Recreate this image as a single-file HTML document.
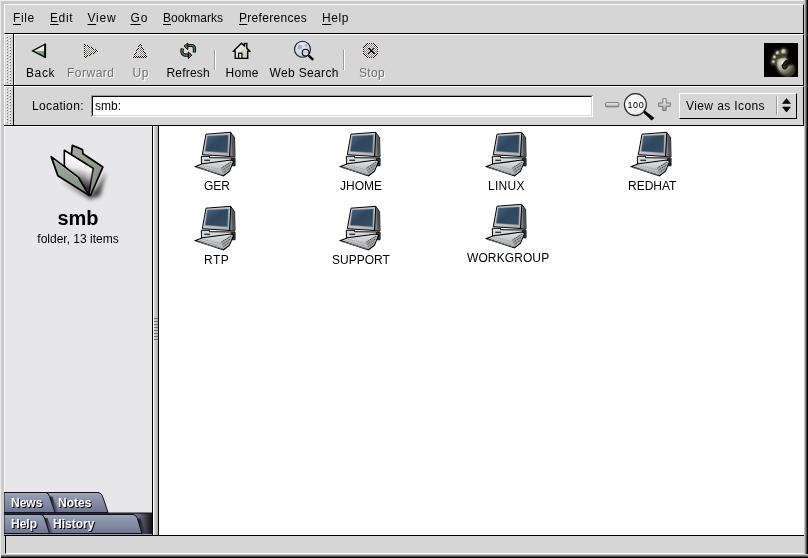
<!DOCTYPE html>
<html><head><meta charset="utf-8">
<style>
*{margin:0;padding:0;box-sizing:border-box}
html,body{width:808px;height:558px;overflow:hidden;background:#d6d6d6;position:relative;font-family:"Liberation Sans",sans-serif;font-size:12px;color:#000}
.a{position:absolute}
.t{position:absolute;white-space:nowrap;line-height:14px;font-size:12px}
.u{text-decoration:underline;text-underline-offset:2px}
.dis{color:#6e6e6e;text-shadow:1px 1px 0 #fff}
</style></head><body><div id="wrap" style="position:absolute;left:0;top:0;width:808px;height:558px;overflow:hidden;will-change:transform">
<!-- window frame -->
<div class="a" style="left:0;top:0;width:808px;height:1px;background:#f0f0f0"></div>
<div class="a" style="left:0;top:0;width:1px;height:558px;background:#ececec"></div>
<div class="a" style="left:1px;top:1px;width:803px;height:3px;background:#cbcbcb"></div>
<div class="a" style="left:1px;top:1px;width:3px;height:553px;background:#cbcbcb"></div>
<div class="a" style="left:804px;top:0;width:4px;height:558px;background:linear-gradient(90deg,#c4c4c4 0,#c4c4c4 1px,#888 1px,#888 2px,#444 2px,#444 3px,#000 3px)"></div>
<div class="a" style="left:1px;top:554px;width:807px;height:4px;background:linear-gradient(180deg,#c4c4c4 0,#c4c4c4 1px,#888 1px,#888 2px,#444 2px,#444 3px,#000 3px)"></div>

<!-- menubar -->
<div class="a" style="left:4px;top:4px;width:800px;height:30px;background:#d6d6d6;border-left:1px solid #fff;border-top:1px solid #fafafa;border-right:1px solid #000;border-bottom:1px solid #000"></div>
<div class="t" style="left:13px;top:11px;letter-spacing:0.6px"><span class="u">F</span>ile</div>
<div class="t" style="left:50px;top:11px;letter-spacing:0.6px"><span class="u">E</span>dit</div>
<div class="t" style="left:87.5px;top:11px;letter-spacing:0.8px"><span class="u">V</span>iew</div>
<div class="t" style="left:130.5px;top:11px;letter-spacing:0.8px"><span class="u">G</span>o</div>
<div class="t" style="left:163px;top:11px"><span class="u">B</span>ookmarks</div>
<div class="t" style="left:239px;top:11px;letter-spacing:0.3px"><span class="u">P</span>references</div>
<div class="t" style="left:322px;top:11px;letter-spacing:0.6px"><span class="u">H</span>elp</div>

<!-- toolbar -->
<div class="a" style="left:4px;top:34px;width:800px;height:52px;background:#d6d6d6;border-top:1px solid #fff;border-right:1px solid #000;border-bottom:1px solid #000"></div>
<div class="a" style="left:4px;top:34px;width:10px;height:51px;border-left:1px solid #fff;border-right:1px solid #000"></div>
<div class="a" style="left:14px;top:35px;width:1px;height:50px;background:#f4f4f4"></div>

<div class="t" style="left:26px;top:66px;letter-spacing:0.6px">Back</div>
<div class="t dis" style="left:67px;top:66px;letter-spacing:0.5px">Forward</div>
<div class="t dis" style="left:132.5px;top:66px;letter-spacing:0.5px">Up</div>
<div class="t" style="left:166.5px;top:66px;letter-spacing:0.2px">Refresh</div>
<div class="t" style="left:225.5px;top:66px;letter-spacing:0.3px">Home</div>
<div class="t" style="left:269.5px;top:66px;letter-spacing:0.35px">Web Search</div>
<div class="t dis" style="left:359px;top:66px;letter-spacing:0.3px">Stop</div>
<div class="a" style="left:214px;top:50px;width:1px;height:20px;background:#9a9a9a"></div>
<div class="a" style="left:215px;top:50px;width:1px;height:20px;background:#fff"></div>
<div class="a" style="left:343px;top:50px;width:1px;height:20px;background:#9a9a9a"></div>
<div class="a" style="left:344px;top:50px;width:1px;height:20px;background:#fff"></div>

<!-- location bar -->
<div class="a" style="left:4px;top:86px;width:800px;height:40px;background:#d6d6d6;border-top:1px solid #fff;border-right:1px solid #000;border-bottom:1px solid #000"></div>
<div class="a" style="left:4px;top:86px;width:10px;height:39px;border-left:1px solid #fff;border-right:1px solid #000"></div>
<div class="t" style="left:32px;top:99px;letter-spacing:0.35px">Location:</div>
<div class="a" style="left:91px;top:95px;width:502px;height:22px;background:#fff;border-left:1px solid #9a9a9a;border-top:1px solid #9a9a9a"></div>
<div class="a" style="left:92px;top:96px;width:500px;height:20px;border-left:1px solid #000;border-top:1px solid #000;border-bottom:1px solid #d6d6d6;border-right:1px solid #d6d6d6"></div>
<div class="t" style="left:95px;top:99px">smb:</div>
<div class="a" style="left:679px;top:93px;width:118px;height:26px;border-left:1px solid #fff;border-top:1px solid #fff;border-right:1px solid #000;border-bottom:1px solid #000"></div>
<div class="t" style="left:686px;top:99px;letter-spacing:0.4px">View as Icons</div>
<div class="a" style="left:776px;top:96px;width:1px;height:19px;background:#9a9a9a"></div>
<div class="a" style="left:777px;top:96px;width:1px;height:19px;background:#fff"></div>

<!-- sidebar -->
<div class="a" style="left:4px;top:126px;width:148px;height:409px;background:#e7e7e9;border-top:1px solid #f6f6f6;border-left:1px solid #f4f4f4"></div>
<div class="a" style="left:152px;top:126px;width:1px;height:409px;background:#000"></div>
<div class="a" style="left:153px;top:126px;width:5px;height:409px;background:linear-gradient(90deg,#fff 0,#fff 1px,#dcdcdc 1px,#a8a8a8)"></div>
<div class="a" style="left:158px;top:126px;width:1px;height:409px;background:#000"></div>
<div class="a" style="left:159px;top:126px;width:645px;height:409px;background:#fff"></div>
<div class="a" style="left:4px;top:535px;width:800px;height:1px;background:#000"></div>
<div class="a" style="left:4px;top:125px;width:800px;height:1px;background:#000"></div>

<div class="a" style="left:0;top:208px;width:156px;text-align:center;font-weight:bold;font-size:20px;line-height:20px">smb</div>
<div class="t" style="left:0;top:232px;width:156px;text-align:center">folder, 13 items</div>

<!-- status -->
<div class="a" style="left:5px;top:536px;width:799px;height:18px;background:#d6d6d6;border-left:1px solid #000;border-bottom:1px solid #fff"></div>

<!-- content labels -->
<div class="t" style="left:204px;top:179px">GER</div>
<div class="t" style="left:340px;top:179px">JHOME</div>
<div class="t" style="left:488px;top:179px;letter-spacing:0.3px">LINUX</div>
<div class="t" style="left:628px;top:179px">REDHAT</div>
<div class="t" style="left:204px;top:253px;letter-spacing:0.5px">RTP</div>
<div class="t" style="left:332px;top:253px">SUPPORT</div>
<div class="t" style="left:467px;top:251px;letter-spacing:0.1px">WORKGROUP</div>

<!-- SVG defs -->
<svg class="a" style="left:0;top:0" width="0" height="0">
<defs>
<linearGradient id="scr" x1="0" y1="0" x2="1" y2="1"><stop offset="0" stop-color="#4a6580"/><stop offset="0.45" stop-color="#2f475e"/><stop offset="1" stop-color="#364e66"/></linearGradient>
<linearGradient id="bez" x1="0" y1="0" x2="1" y2="1"><stop offset="0" stop-color="#dcdee0"/><stop offset="1" stop-color="#a8acb0"/></linearGradient>
<linearGradient id="kb" x1="0" y1="0" x2="0" y2="1"><stop offset="0" stop-color="#e2e4e4"/><stop offset="1" stop-color="#a8acae"/></linearGradient>
<pattern id="chk" width="2" height="2" patternUnits="userSpaceOnUse"><rect width="2" height="2" fill="#f0f0f0"/><rect width="1" height="1" fill="#8a8a8a"/><rect x="1" y="1" width="1" height="1" fill="#8a8a8a"/></pattern>
<pattern id="chkg" width="2" height="2" patternUnits="userSpaceOnUse"><rect width="2" height="2" fill="#e8e8e8"/><rect width="1" height="1" fill="#5a7a5a"/><rect x="1" y="1" width="1" height="1" fill="#5a7a5a"/></pattern>
<symbol id="pc" viewBox="0 0 50 50">
  <polygon points="38.5,4.3 42.6,9.5 43,29 37,28.5" fill="#7c8084" stroke="#000" stroke-width="0.9"/>
  <polygon points="39.5,6.5 42.4,9.8 42.6,28.6 40.5,28.5" fill="#505458"/>
  <polygon points="14,6.2 38.8,4.3 37.5,28.5 10.3,26.7" fill="url(#bez)" stroke="#000" stroke-width="1"/>
  <polygon points="15.4,8 36.3,7 35.6,24.8 13.2,23.2" fill="url(#scr)" stroke="#6a7480" stroke-width="0.5"/>
  <polygon points="9.3,28.3 17.5,28.3 17.5,29.7 43,30 43,37.8 9.5,36.5" fill="#d6d8da" stroke="#000" stroke-width="1"/>
  <polygon points="39,30 43,30 43,37.8 39,37.5" fill="#262829"/>
  <rect x="12.3" y="31.6" width="5.8" height="1.4" fill="#303234"/>
  <polygon points="3.5,38.6 10.5,35.8 39,32 41.5,33.2 37.5,43.2 31.5,47.8" fill="url(#kb)" stroke="#000" stroke-width="1.1"/>
  <polygon points="28.5,40.2 38.5,33.5 40.5,34.2 36.8,42.5 31.5,46.5" fill="#a4a8aa"/>
  <path d="M29.5,40 L38.8,34.2 M30.5,42.2 L38.5,37 M31.5,44.4 L37.8,40" stroke="#2a2c2e" stroke-width="0.9" stroke-dasharray="1.1 0.9"/>
  <path d="M8,38.6 L27,43.6 M11,37.4 L29,41.6" stroke="#8a8e90" stroke-width="0.7" stroke-dasharray="1.2 0.8"/>
  <path d="M4.8,39.6 L31,47" stroke="#7a7e80" stroke-width="0.9"/>
</symbol>
</defs></svg>

<!-- toolbar icons -->
<svg class="a" style="left:28px;top:40px" width="24" height="22" viewBox="0 0 24 22">
  <defs><linearGradient id="bk" x1="0" y1="0" x2="0" y2="1"><stop offset="0" stop-color="#ffffff"/><stop offset="0.49" stop-color="#dfe8df"/><stop offset="0.5" stop-color="#7cb07c"/><stop offset="1" stop-color="#4a8a4a"/></linearGradient></defs>
  <polygon points="4.6,10.9 17,4.3 17,17.3" fill="url(#bk)" stroke="#000" stroke-width="1.2" stroke-linejoin="miter"/>
  <rect x="16.3" y="3.8" width="1.8" height="14" fill="#000"/>
</svg>
<svg class="a" style="left:84px;top:44px" width="14" height="14" shape-rendering="crispEdges"><rect x="0" y="0" width="1" height="1" fill="#000"/><rect x="0" y="1" width="1" height="1" fill="#fff"/><rect x="1" y="1" width="1" height="1" fill="#000"/><rect x="2" y="1" width="1" height="1" fill="#fff"/><rect x="3" y="1" width="1" height="1" fill="#000"/><rect x="0" y="2" width="1" height="1" fill="#000"/><rect x="1" y="2" width="1" height="1" fill="#f4f4f4"/><rect x="2" y="2" width="1" height="1" fill="#9a9a9a"/><rect x="3" y="2" width="1" height="1" fill="#fff"/><rect x="4" y="2" width="1" height="1" fill="#000"/><rect x="0" y="3" width="1" height="1" fill="#fff"/><rect x="1" y="3" width="1" height="1" fill="#9a9a9a"/><rect x="2" y="3" width="1" height="1" fill="#f4f4f4"/><rect x="3" y="3" width="1" height="1" fill="#9a9a9a"/><rect x="4" y="3" width="1" height="1" fill="#f4f4f4"/><rect x="5" y="3" width="1" height="1" fill="#000"/><rect x="6" y="3" width="1" height="1" fill="#fff"/><rect x="7" y="3" width="1" height="1" fill="#000"/><rect x="0" y="4" width="1" height="1" fill="#000"/><rect x="1" y="4" width="1" height="1" fill="#f4f4f4"/><rect x="2" y="4" width="1" height="1" fill="#9a9a9a"/><rect x="3" y="4" width="1" height="1" fill="#f4f4f4"/><rect x="4" y="4" width="1" height="1" fill="#9a9a9a"/><rect x="5" y="4" width="1" height="1" fill="#f4f4f4"/><rect x="6" y="4" width="1" height="1" fill="#9a9a9a"/><rect x="7" y="4" width="1" height="1" fill="#fff"/><rect x="8" y="4" width="1" height="1" fill="#000"/><rect x="0" y="5" width="1" height="1" fill="#fff"/><rect x="1" y="5" width="1" height="1" fill="#9a9a9a"/><rect x="2" y="5" width="1" height="1" fill="#f4f4f4"/><rect x="3" y="5" width="1" height="1" fill="#9a9a9a"/><rect x="4" y="5" width="1" height="1" fill="#f4f4f4"/><rect x="5" y="5" width="1" height="1" fill="#9a9a9a"/><rect x="6" y="5" width="1" height="1" fill="#f4f4f4"/><rect x="7" y="5" width="1" height="1" fill="#9a9a9a"/><rect x="8" y="5" width="1" height="1" fill="#f4f4f4"/><rect x="9" y="5" width="1" height="1" fill="#000"/><rect x="10" y="5" width="1" height="1" fill="#fff"/><rect x="11" y="5" width="1" height="1" fill="#000"/><rect x="0" y="6" width="1" height="1" fill="#000"/><rect x="1" y="6" width="1" height="1" fill="#f4f4f4"/><rect x="2" y="6" width="1" height="1" fill="#6a806a"/><rect x="3" y="6" width="1" height="1" fill="#f4f4f4"/><rect x="4" y="6" width="1" height="1" fill="#6a806a"/><rect x="5" y="6" width="1" height="1" fill="#f4f4f4"/><rect x="6" y="6" width="1" height="1" fill="#6a806a"/><rect x="7" y="6" width="1" height="1" fill="#f4f4f4"/><rect x="8" y="6" width="1" height="1" fill="#6a806a"/><rect x="9" y="6" width="1" height="1" fill="#f4f4f4"/><rect x="10" y="6" width="1" height="1" fill="#6a806a"/><rect x="11" y="6" width="1" height="1" fill="#fff"/><rect x="12" y="6" width="1" height="1" fill="#000"/><rect x="0" y="7" width="1" height="1" fill="#fff"/><rect x="1" y="7" width="1" height="1" fill="#6a806a"/><rect x="2" y="7" width="1" height="1" fill="#f4f4f4"/><rect x="3" y="7" width="1" height="1" fill="#6a806a"/><rect x="4" y="7" width="1" height="1" fill="#f4f4f4"/><rect x="5" y="7" width="1" height="1" fill="#6a806a"/><rect x="6" y="7" width="1" height="1" fill="#f4f4f4"/><rect x="7" y="7" width="1" height="1" fill="#6a806a"/><rect x="8" y="7" width="1" height="1" fill="#f4f4f4"/><rect x="9" y="7" width="1" height="1" fill="#6a806a"/><rect x="10" y="7" width="1" height="1" fill="#f4f4f4"/><rect x="11" y="7" width="1" height="1" fill="#000"/><rect x="12" y="7" width="1" height="1" fill="#fff"/><rect x="13" y="7" width="1" height="1" fill="#000"/><rect x="0" y="8" width="1" height="1" fill="#000"/><rect x="1" y="8" width="1" height="1" fill="#f4f4f4"/><rect x="2" y="8" width="1" height="1" fill="#6a806a"/><rect x="3" y="8" width="1" height="1" fill="#f4f4f4"/><rect x="4" y="8" width="1" height="1" fill="#6a806a"/><rect x="5" y="8" width="1" height="1" fill="#f4f4f4"/><rect x="6" y="8" width="1" height="1" fill="#6a806a"/><rect x="7" y="8" width="1" height="1" fill="#f4f4f4"/><rect x="8" y="8" width="1" height="1" fill="#6a806a"/><rect x="9" y="8" width="1" height="1" fill="#fff"/><rect x="10" y="8" width="1" height="1" fill="#000"/><rect x="0" y="9" width="1" height="1" fill="#fff"/><rect x="1" y="9" width="1" height="1" fill="#6a806a"/><rect x="2" y="9" width="1" height="1" fill="#f4f4f4"/><rect x="3" y="9" width="1" height="1" fill="#6a806a"/><rect x="4" y="9" width="1" height="1" fill="#f4f4f4"/><rect x="5" y="9" width="1" height="1" fill="#6a806a"/><rect x="6" y="9" width="1" height="1" fill="#f4f4f4"/><rect x="7" y="9" width="1" height="1" fill="#000"/><rect x="8" y="9" width="1" height="1" fill="#fff"/><rect x="9" y="9" width="1" height="1" fill="#000"/><rect x="0" y="10" width="1" height="1" fill="#000"/><rect x="1" y="10" width="1" height="1" fill="#f4f4f4"/><rect x="2" y="10" width="1" height="1" fill="#6a806a"/><rect x="3" y="10" width="1" height="1" fill="#f4f4f4"/><rect x="4" y="10" width="1" height="1" fill="#6a806a"/><rect x="5" y="10" width="1" height="1" fill="#fff"/><rect x="6" y="10" width="1" height="1" fill="#000"/><rect x="0" y="11" width="1" height="1" fill="#fff"/><rect x="1" y="11" width="1" height="1" fill="#6a806a"/><rect x="2" y="11" width="1" height="1" fill="#f4f4f4"/><rect x="3" y="11" width="1" height="1" fill="#000"/><rect x="4" y="11" width="1" height="1" fill="#fff"/><rect x="5" y="11" width="1" height="1" fill="#000"/><rect x="0" y="12" width="1" height="1" fill="#000"/><rect x="1" y="12" width="1" height="1" fill="#fff"/><rect x="2" y="12" width="1" height="1" fill="#000"/><rect x="0" y="13" width="1" height="1" fill="#fff"/><rect x="1" y="13" width="1" height="1" fill="#000"/></svg>
<svg class="a" style="left:133px;top:44px" width="14" height="14" shape-rendering="crispEdges"><rect x="7" y="0" width="1" height="1" fill="#000"/><rect x="6" y="1" width="1" height="1" fill="#000"/><rect x="7" y="1" width="1" height="1" fill="#fff"/><rect x="8" y="1" width="1" height="1" fill="#000"/><rect x="5" y="2" width="1" height="1" fill="#000"/><rect x="6" y="2" width="1" height="1" fill="#fff"/><rect x="7" y="2" width="1" height="1" fill="#6a806a"/><rect x="5" y="3" width="1" height="1" fill="#fff"/><rect x="6" y="3" width="1" height="1" fill="#9a9a9a"/><rect x="7" y="3" width="1" height="1" fill="#f4f4f4"/><rect x="8" y="3" width="1" height="1" fill="#000"/><rect x="5" y="4" width="1" height="1" fill="#000"/><rect x="6" y="4" width="1" height="1" fill="#f4f4f4"/><rect x="7" y="4" width="1" height="1" fill="#6a806a"/><rect x="8" y="4" width="1" height="1" fill="#f4f4f4"/><rect x="9" y="4" width="1" height="1" fill="#000"/><rect x="4" y="5" width="1" height="1" fill="#000"/><rect x="5" y="5" width="1" height="1" fill="#f4f4f4"/><rect x="6" y="5" width="1" height="1" fill="#9a9a9a"/><rect x="7" y="5" width="1" height="1" fill="#f4f4f4"/><rect x="8" y="5" width="1" height="1" fill="#6a806a"/><rect x="9" y="5" width="1" height="1" fill="#fff"/><rect x="10" y="5" width="1" height="1" fill="#000"/><rect x="3" y="6" width="1" height="1" fill="#000"/><rect x="4" y="6" width="1" height="1" fill="#fff"/><rect x="5" y="6" width="1" height="1" fill="#9a9a9a"/><rect x="6" y="6" width="1" height="1" fill="#f4f4f4"/><rect x="7" y="6" width="1" height="1" fill="#6a806a"/><rect x="8" y="6" width="1" height="1" fill="#f4f4f4"/><rect x="9" y="6" width="1" height="1" fill="#6a806a"/><rect x="3" y="7" width="1" height="1" fill="#fff"/><rect x="4" y="7" width="1" height="1" fill="#9a9a9a"/><rect x="5" y="7" width="1" height="1" fill="#f4f4f4"/><rect x="6" y="7" width="1" height="1" fill="#9a9a9a"/><rect x="7" y="7" width="1" height="1" fill="#f4f4f4"/><rect x="8" y="7" width="1" height="1" fill="#6a806a"/><rect x="9" y="7" width="1" height="1" fill="#f4f4f4"/><rect x="10" y="7" width="1" height="1" fill="#000"/><rect x="3" y="8" width="1" height="1" fill="#000"/><rect x="4" y="8" width="1" height="1" fill="#f4f4f4"/><rect x="5" y="8" width="1" height="1" fill="#9a9a9a"/><rect x="6" y="8" width="1" height="1" fill="#f4f4f4"/><rect x="7" y="8" width="1" height="1" fill="#6a806a"/><rect x="8" y="8" width="1" height="1" fill="#f4f4f4"/><rect x="9" y="8" width="1" height="1" fill="#6a806a"/><rect x="10" y="8" width="1" height="1" fill="#f4f4f4"/><rect x="11" y="8" width="1" height="1" fill="#000"/><rect x="2" y="9" width="1" height="1" fill="#000"/><rect x="3" y="9" width="1" height="1" fill="#f4f4f4"/><rect x="4" y="9" width="1" height="1" fill="#9a9a9a"/><rect x="5" y="9" width="1" height="1" fill="#f4f4f4"/><rect x="6" y="9" width="1" height="1" fill="#9a9a9a"/><rect x="7" y="9" width="1" height="1" fill="#f4f4f4"/><rect x="8" y="9" width="1" height="1" fill="#6a806a"/><rect x="9" y="9" width="1" height="1" fill="#f4f4f4"/><rect x="10" y="9" width="1" height="1" fill="#6a806a"/><rect x="11" y="9" width="1" height="1" fill="#fff"/><rect x="12" y="9" width="1" height="1" fill="#000"/><rect x="1" y="10" width="1" height="1" fill="#000"/><rect x="2" y="10" width="1" height="1" fill="#fff"/><rect x="3" y="10" width="1" height="1" fill="#9a9a9a"/><rect x="4" y="10" width="1" height="1" fill="#f4f4f4"/><rect x="5" y="10" width="1" height="1" fill="#9a9a9a"/><rect x="6" y="10" width="1" height="1" fill="#f4f4f4"/><rect x="7" y="10" width="1" height="1" fill="#6a806a"/><rect x="8" y="10" width="1" height="1" fill="#f4f4f4"/><rect x="9" y="10" width="1" height="1" fill="#6a806a"/><rect x="10" y="10" width="1" height="1" fill="#f4f4f4"/><rect x="11" y="10" width="1" height="1" fill="#6a806a"/><rect x="1" y="11" width="1" height="1" fill="#fff"/><rect x="2" y="11" width="1" height="1" fill="#9a9a9a"/><rect x="3" y="11" width="1" height="1" fill="#f4f4f4"/><rect x="4" y="11" width="1" height="1" fill="#9a9a9a"/><rect x="5" y="11" width="1" height="1" fill="#f4f4f4"/><rect x="6" y="11" width="1" height="1" fill="#9a9a9a"/><rect x="7" y="11" width="1" height="1" fill="#f4f4f4"/><rect x="8" y="11" width="1" height="1" fill="#6a806a"/><rect x="9" y="11" width="1" height="1" fill="#f4f4f4"/><rect x="10" y="11" width="1" height="1" fill="#6a806a"/><rect x="11" y="11" width="1" height="1" fill="#f4f4f4"/><rect x="12" y="11" width="1" height="1" fill="#000"/><rect x="1" y="12" width="1" height="1" fill="#000"/><rect x="2" y="12" width="1" height="1" fill="#fff"/><rect x="3" y="12" width="1" height="1" fill="#000"/><rect x="4" y="12" width="1" height="1" fill="#fff"/><rect x="5" y="12" width="1" height="1" fill="#000"/><rect x="6" y="12" width="1" height="1" fill="#fff"/><rect x="7" y="12" width="1" height="1" fill="#000"/><rect x="8" y="12" width="1" height="1" fill="#fff"/><rect x="9" y="12" width="1" height="1" fill="#000"/><rect x="10" y="12" width="1" height="1" fill="#fff"/><rect x="11" y="12" width="1" height="1" fill="#000"/><rect x="12" y="12" width="1" height="1" fill="#fff"/><rect x="13" y="12" width="1" height="1" fill="#000"/><rect x="0" y="13" width="1" height="1" fill="#000"/><rect x="2" y="13" width="1" height="1" fill="#000"/><rect x="4" y="13" width="1" height="1" fill="#000"/><rect x="6" y="13" width="1" height="1" fill="#000"/><rect x="8" y="13" width="1" height="1" fill="#000"/><rect x="10" y="13" width="1" height="1" fill="#000"/><rect x="12" y="13" width="1" height="1" fill="#000"/></svg>
<svg class="a" style="left:176px;top:38px" width="24" height="24" viewBox="0 0 24 24">
  <path d="M12,7.5 L16,7.5 Q18.5,7.8 18.5,11 L18.3,14.5" fill="none" stroke="#000" stroke-width="3.2"/>
  <path d="M12,7.5 L16,7.5 Q18.5,7.8 18.5,11 L18.3,14.5" fill="none" stroke="#4f7a4f" stroke-width="1.4"/>
  <polygon points="8,8.2 11.8,5 11.8,11.5" fill="#4f7a4f" stroke="#000" stroke-width="1"/>
  <path d="M6.5,10.5 L5.8,13 Q6,16.5 9,17.2 L12.5,17.2" fill="none" stroke="#000" stroke-width="3.2"/>
  <path d="M6.5,10.5 L5.8,13 Q6,16.5 9,17.2 L12.5,17.2" fill="none" stroke="#4f7a4f" stroke-width="1.4"/>
  <polygon points="15.8,17.2 12.3,14 12.3,20.5" fill="#4f7a4f" stroke="#000" stroke-width="1"/>
</svg>
<svg class="a" style="left:228px;top:38px" width="28" height="24" viewBox="0 0 28 24">
  <defs><linearGradient id="hm" x1="0" y1="0" x2="1" y2="1"><stop offset="0" stop-color="#ffffff"/><stop offset="1" stop-color="#b8c0b0"/></linearGradient></defs>
  <polygon points="13.5,5.2 16.5,8 16.5,5.5 18.8,5.5 18.8,10.3 21.6,13.1 19.7,13.1 19.7,20.4 7.2,20.4 7.2,13.1 5.6,13.1" fill="url(#hm)" stroke="#000" stroke-width="1.4" stroke-linejoin="miter"/>
  <rect x="10.6" y="15.2" width="3.3" height="5.2" fill="#e8ece4" stroke="#000" stroke-width="1.2"/>
</svg>
<svg class="a" style="left:290px;top:38px" width="28" height="24" viewBox="0 0 28 24">
  <defs><radialGradient id="gl" cx="0.4" cy="0.35" r="0.7"><stop offset="0" stop-color="#c8c8cc"/><stop offset="0.3" stop-color="#dfe6ee"/><stop offset="1" stop-color="#b8c8d8"/></radialGradient></defs>
  <circle cx="12.5" cy="11.2" r="8" fill="url(#gl)" stroke="#1a1a1a" stroke-width="1.1"/><path d="M8,7.5 q2,-1 3.5,0.5 q0.5,2 -1,3.5 q-2,0.5 -3,-1 z M14.5,6 q2,0 3,2 q-1,1 -2.5,0.5 z" fill="#9a9aa0" opacity="0.7"/>
  <line x1="18.5" y1="17.5" x2="23.2" y2="21.8" stroke="#000" stroke-width="2.4"/>
  <circle cx="15.6" cy="14.6" r="3.4" fill="#d0d4da" stroke="#000" stroke-width="1.1"/>
</svg>
<svg class="a" style="left:363px;top:43px" width="15" height="15" shape-rendering="crispEdges"><rect x="4" y="0" width="1" height="1" fill="#000"/><rect x="5" y="0" width="1" height="1" fill="#ffffff"/><rect x="6" y="0" width="1" height="1" fill="#000"/><rect x="7" y="0" width="1" height="1" fill="#ffffff"/><rect x="8" y="0" width="1" height="1" fill="#000"/><rect x="9" y="0" width="1" height="1" fill="#ffffff"/><rect x="10" y="0" width="1" height="1" fill="#000"/><rect x="3" y="1" width="1" height="1" fill="#000"/><rect x="4" y="1" width="1" height="1" fill="#ffffff"/><rect x="5" y="1" width="1" height="1" fill="#8a7a7a"/><rect x="6" y="1" width="1" height="1" fill="#f4f4f4"/><rect x="7" y="1" width="1" height="1" fill="#8a7a7a"/><rect x="8" y="1" width="1" height="1" fill="#f4f4f4"/><rect x="9" y="1" width="1" height="1" fill="#8a7a7a"/><rect x="10" y="1" width="1" height="1" fill="#ffffff"/><rect x="11" y="1" width="1" height="1" fill="#000"/><rect x="2" y="2" width="1" height="1" fill="#000"/><rect x="3" y="2" width="1" height="1" fill="#f4f4f4"/><rect x="4" y="2" width="1" height="1" fill="#8a7a7a"/><rect x="5" y="2" width="1" height="1" fill="#f4f4f4"/><rect x="6" y="2" width="1" height="1" fill="#8a7a7a"/><rect x="7" y="2" width="1" height="1" fill="#f4f4f4"/><rect x="8" y="2" width="1" height="1" fill="#8a7a7a"/><rect x="9" y="2" width="1" height="1" fill="#f4f4f4"/><rect x="10" y="2" width="1" height="1" fill="#8a7a7a"/><rect x="11" y="2" width="1" height="1" fill="#f4f4f4"/><rect x="12" y="2" width="1" height="1" fill="#000"/><rect x="1" y="3" width="1" height="1" fill="#000"/><rect x="2" y="3" width="1" height="1" fill="#f4f4f4"/><rect x="3" y="3" width="1" height="1" fill="#8a7a7a"/><rect x="4" y="3" width="1" height="1" fill="#f4f4f4"/><rect x="5" y="3" width="1" height="1" fill="#8a7a7a"/><rect x="6" y="3" width="1" height="1" fill="#f4f4f4"/><rect x="7" y="3" width="1" height="1" fill="#8a7a7a"/><rect x="8" y="3" width="1" height="1" fill="#f4f4f4"/><rect x="9" y="3" width="1" height="1" fill="#8a7a7a"/><rect x="10" y="3" width="1" height="1" fill="#f4f4f4"/><rect x="11" y="3" width="1" height="1" fill="#8a7a7a"/><rect x="12" y="3" width="1" height="1" fill="#f4f4f4"/><rect x="13" y="3" width="1" height="1" fill="#000"/><rect x="0" y="4" width="1" height="1" fill="#000"/><rect x="1" y="4" width="1" height="1" fill="#ffffff"/><rect x="2" y="4" width="1" height="1" fill="#8a7a7a"/><rect x="3" y="4" width="1" height="1" fill="#f4f4f4"/><rect x="4" y="4" width="1" height="1" fill="#8a7a7a"/><rect x="5" y="4" width="1" height="1" fill="#f4f4f4"/><rect x="6" y="4" width="1" height="1" fill="#8a7a7a"/><rect x="7" y="4" width="1" height="1" fill="#f4f4f4"/><rect x="8" y="4" width="1" height="1" fill="#8a7a7a"/><rect x="9" y="4" width="1" height="1" fill="#f4f4f4"/><rect x="10" y="4" width="1" height="1" fill="#8a7a7a"/><rect x="11" y="4" width="1" height="1" fill="#f4f4f4"/><rect x="12" y="4" width="1" height="1" fill="#8a7a7a"/><rect x="13" y="4" width="1" height="1" fill="#ffffff"/><rect x="14" y="4" width="1" height="1" fill="#000"/><rect x="0" y="5" width="1" height="1" fill="#ffffff"/><rect x="1" y="5" width="1" height="1" fill="#8a7a7a"/><rect x="2" y="5" width="1" height="1" fill="#f4f4f4"/><rect x="3" y="5" width="1" height="1" fill="#8a7a7a"/><rect x="4" y="5" width="1" height="1" fill="#f4f4f4"/><rect x="6" y="5" width="1" height="1" fill="#f4f4f4"/><rect x="7" y="5" width="1" height="1" fill="#8a7a7a"/><rect x="8" y="5" width="1" height="1" fill="#f4f4f4"/><rect x="9" y="5" width="1" height="1" fill="#8a7a7a"/><rect x="11" y="5" width="1" height="1" fill="#8a7a7a"/><rect x="12" y="5" width="1" height="1" fill="#f4f4f4"/><rect x="13" y="5" width="1" height="1" fill="#8a7a7a"/><rect x="14" y="5" width="1" height="1" fill="#ffffff"/><rect x="0" y="6" width="1" height="1" fill="#000"/><rect x="1" y="6" width="1" height="1" fill="#f4f4f4"/><rect x="2" y="6" width="1" height="1" fill="#8a7a7a"/><rect x="3" y="6" width="1" height="1" fill="#f4f4f4"/><rect x="4" y="6" width="1" height="1" fill="#8a7a7a"/><rect x="5" y="6" width="1" height="1" fill="#f4f4f4"/><rect x="7" y="6" width="1" height="1" fill="#f4f4f4"/><rect x="8" y="6" width="1" height="1" fill="#8a7a7a"/><rect x="10" y="6" width="1" height="1" fill="#8a7a7a"/><rect x="11" y="6" width="1" height="1" fill="#f4f4f4"/><rect x="12" y="6" width="1" height="1" fill="#8a7a7a"/><rect x="13" y="6" width="1" height="1" fill="#f4f4f4"/><rect x="14" y="6" width="1" height="1" fill="#000"/><rect x="0" y="7" width="1" height="1" fill="#ffffff"/><rect x="1" y="7" width="1" height="1" fill="#8a7a7a"/><rect x="2" y="7" width="1" height="1" fill="#f4f4f4"/><rect x="3" y="7" width="1" height="1" fill="#8a7a7a"/><rect x="4" y="7" width="1" height="1" fill="#f4f4f4"/><rect x="5" y="7" width="1" height="1" fill="#8a7a7a"/><rect x="6" y="7" width="1" height="1" fill="#f4f4f4"/><rect x="9" y="7" width="1" height="1" fill="#8a7a7a"/><rect x="10" y="7" width="1" height="1" fill="#f4f4f4"/><rect x="11" y="7" width="1" height="1" fill="#8a7a7a"/><rect x="12" y="7" width="1" height="1" fill="#f4f4f4"/><rect x="13" y="7" width="1" height="1" fill="#8a7a7a"/><rect x="14" y="7" width="1" height="1" fill="#ffffff"/><rect x="0" y="8" width="1" height="1" fill="#000"/><rect x="1" y="8" width="1" height="1" fill="#f4f4f4"/><rect x="2" y="8" width="1" height="1" fill="#8a7a7a"/><rect x="3" y="8" width="1" height="1" fill="#f4f4f4"/><rect x="4" y="8" width="1" height="1" fill="#8a7a7a"/><rect x="5" y="8" width="1" height="1" fill="#f4f4f4"/><rect x="6" y="8" width="1" height="1" fill="#8a7a7a"/><rect x="9" y="8" width="1" height="1" fill="#f4f4f4"/><rect x="10" y="8" width="1" height="1" fill="#8a7a7a"/><rect x="11" y="8" width="1" height="1" fill="#f4f4f4"/><rect x="12" y="8" width="1" height="1" fill="#8a7a7a"/><rect x="13" y="8" width="1" height="1" fill="#f4f4f4"/><rect x="14" y="8" width="1" height="1" fill="#000"/><rect x="0" y="9" width="1" height="1" fill="#ffffff"/><rect x="1" y="9" width="1" height="1" fill="#8a7a7a"/><rect x="2" y="9" width="1" height="1" fill="#f4f4f4"/><rect x="3" y="9" width="1" height="1" fill="#8a7a7a"/><rect x="4" y="9" width="1" height="1" fill="#f4f4f4"/><rect x="5" y="9" width="1" height="1" fill="#8a7a7a"/><rect x="7" y="9" width="1" height="1" fill="#8a7a7a"/><rect x="8" y="9" width="1" height="1" fill="#f4f4f4"/><rect x="10" y="9" width="1" height="1" fill="#f4f4f4"/><rect x="11" y="9" width="1" height="1" fill="#8a7a7a"/><rect x="12" y="9" width="1" height="1" fill="#f4f4f4"/><rect x="13" y="9" width="1" height="1" fill="#8a7a7a"/><rect x="14" y="9" width="1" height="1" fill="#ffffff"/><rect x="0" y="10" width="1" height="1" fill="#000"/><rect x="1" y="10" width="1" height="1" fill="#ffffff"/><rect x="2" y="10" width="1" height="1" fill="#8a7a7a"/><rect x="3" y="10" width="1" height="1" fill="#f4f4f4"/><rect x="4" y="10" width="1" height="1" fill="#8a7a7a"/><rect x="6" y="10" width="1" height="1" fill="#8a7a7a"/><rect x="7" y="10" width="1" height="1" fill="#f4f4f4"/><rect x="8" y="10" width="1" height="1" fill="#8a7a7a"/><rect x="9" y="10" width="1" height="1" fill="#f4f4f4"/><rect x="11" y="10" width="1" height="1" fill="#f4f4f4"/><rect x="12" y="10" width="1" height="1" fill="#8a7a7a"/><rect x="13" y="10" width="1" height="1" fill="#ffffff"/><rect x="14" y="10" width="1" height="1" fill="#000"/><rect x="1" y="11" width="1" height="1" fill="#000"/><rect x="2" y="11" width="1" height="1" fill="#f4f4f4"/><rect x="3" y="11" width="1" height="1" fill="#8a7a7a"/><rect x="4" y="11" width="1" height="1" fill="#f4f4f4"/><rect x="5" y="11" width="1" height="1" fill="#8a7a7a"/><rect x="6" y="11" width="1" height="1" fill="#f4f4f4"/><rect x="7" y="11" width="1" height="1" fill="#8a7a7a"/><rect x="8" y="11" width="1" height="1" fill="#f4f4f4"/><rect x="9" y="11" width="1" height="1" fill="#8a7a7a"/><rect x="10" y="11" width="1" height="1" fill="#f4f4f4"/><rect x="11" y="11" width="1" height="1" fill="#8a7a7a"/><rect x="12" y="11" width="1" height="1" fill="#f4f4f4"/><rect x="13" y="11" width="1" height="1" fill="#000"/><rect x="2" y="12" width="1" height="1" fill="#000"/><rect x="3" y="12" width="1" height="1" fill="#f4f4f4"/><rect x="4" y="12" width="1" height="1" fill="#8a7a7a"/><rect x="5" y="12" width="1" height="1" fill="#f4f4f4"/><rect x="6" y="12" width="1" height="1" fill="#8a7a7a"/><rect x="7" y="12" width="1" height="1" fill="#f4f4f4"/><rect x="8" y="12" width="1" height="1" fill="#8a7a7a"/><rect x="9" y="12" width="1" height="1" fill="#f4f4f4"/><rect x="10" y="12" width="1" height="1" fill="#8a7a7a"/><rect x="11" y="12" width="1" height="1" fill="#f4f4f4"/><rect x="12" y="12" width="1" height="1" fill="#000"/><rect x="3" y="13" width="1" height="1" fill="#000"/><rect x="4" y="13" width="1" height="1" fill="#ffffff"/><rect x="5" y="13" width="1" height="1" fill="#8a7a7a"/><rect x="6" y="13" width="1" height="1" fill="#f4f4f4"/><rect x="7" y="13" width="1" height="1" fill="#8a7a7a"/><rect x="8" y="13" width="1" height="1" fill="#f4f4f4"/><rect x="9" y="13" width="1" height="1" fill="#8a7a7a"/><rect x="10" y="13" width="1" height="1" fill="#ffffff"/><rect x="11" y="13" width="1" height="1" fill="#000"/><rect x="4" y="14" width="1" height="1" fill="#000"/><rect x="5" y="14" width="1" height="1" fill="#ffffff"/><rect x="6" y="14" width="1" height="1" fill="#000"/><rect x="7" y="14" width="1" height="1" fill="#ffffff"/><rect x="8" y="14" width="1" height="1" fill="#000"/><rect x="9" y="14" width="1" height="1" fill="#ffffff"/><rect x="10" y="14" width="1" height="1" fill="#000"/><rect x="9" y="9" width="1" height="1" fill="#000"/><rect x="6" y="6" width="1" height="1" fill="#000"/><rect x="10" y="10" width="1" height="1" fill="#000"/><rect x="8" y="8" width="1" height="1" fill="#000"/><rect x="6" y="9" width="1" height="1" fill="#000"/><rect x="5" y="5" width="1" height="1" fill="#000"/><rect x="7" y="8" width="1" height="1" fill="#000"/><rect x="8" y="7" width="1" height="1" fill="#000"/><rect x="10" y="5" width="1" height="1" fill="#000"/><rect x="5" y="10" width="1" height="1" fill="#000"/><rect x="9" y="6" width="1" height="1" fill="#000"/><rect x="7" y="7" width="1" height="1" fill="#000"/><rect x="10" y="9" width="1" height="1" fill="#000"/><rect x="7" y="6" width="1" height="1" fill="#000"/><rect x="11" y="10" width="1" height="1" fill="#000"/><rect x="9" y="8" width="1" height="1" fill="#000"/><rect x="6" y="5" width="1" height="1" fill="#000"/><rect x="8" y="7" width="1" height="1" fill="#000"/></svg>

<!-- gnome foot -->
<svg class="a" style="left:764px;top:43px" width="34" height="34" viewBox="0 0 34 34">
  <defs><radialGradient id="ft" cx="0.35" cy="0.3" r="0.75"><stop offset="0" stop-color="#f0f0ec"/><stop offset="0.45" stop-color="#a8a69c"/><stop offset="1" stop-color="#3a382c"/></radialGradient>
  <filter id="glow" x="-30%" y="-30%" width="160%" height="160%"><feGaussianBlur stdDeviation="0.9"/></filter></defs>
  <rect width="34" height="34" fill="#000"/>
  <g id="footshape">
    <ellipse cx="19.8" cy="9.3" rx="3" ry="3.6"/>
    <ellipse cx="13.8" cy="10.4" rx="2.3" ry="2.6"/>
    <ellipse cx="10.7" cy="14.4" rx="2" ry="2.4"/>
    <ellipse cx="9.7" cy="19" rx="2.2" ry="2.1"/>
    <path d="M13.6,16.3 Q17,14.2 21.1,14.6 Q23.5,15 23.2,16.8 Q21,19.5 18.2,22.3 Q18.5,25.5 20.6,25.8 Q22.5,25 23.6,23.3 Q27,21.8 29.2,22.8 Q30.5,26 29.5,28.5 Q27.5,32.5 24.5,32.8 Q19.5,32.5 16,29 Q12.8,25.5 12.6,20.5 Q12.8,17.5 13.6,16.3 Z"/>
  </g>
  <use href="#footshape" fill="#c8c070" stroke="#8a8448" stroke-width="1.6" filter="url(#glow)" opacity="0.75"/>
  <use href="#footshape" fill="url(#ft)" stroke="#2a2818" stroke-width="0.5"/>
  <path d="M22.8,17 Q19.5,20 18.2,22.5 Q18.5,26 21,26 Q22.5,25 23.6,23.3" stroke="#000" stroke-width="1.2" fill="none"/><ellipse cx="19.5" cy="11.5" rx="2" ry="1" fill="#202020" opacity="0.6"/><ellipse cx="13.8" cy="12.3" rx="1.6" ry="0.8" fill="#202020" opacity="0.6"/>
</svg>
<!-- zoom control -->
<svg class="a" style="left:600px;top:88px" width="76" height="36" viewBox="0 0 76 36">
  <defs><radialGradient id="mg" cx="0.4" cy="0.3" r="0.8"><stop offset="0" stop-color="#ffffff"/><stop offset="0.7" stop-color="#f4f4f4"/><stop offset="1" stop-color="#c0c0c0"/></radialGradient>
  <linearGradient id="pm" x1="0" y1="0" x2="0" y2="1"><stop offset="0" stop-color="#ffffff"/><stop offset="1" stop-color="#9a9a9a"/></linearGradient></defs>
  <rect x="5.6" y="14.6" width="13.3" height="4.2" rx="0.8" fill="url(#pm)" stroke="#6a6a6a" stroke-width="0.9"/>
  <polygon points="42,23.5 44,22 54.5,30 51.5,32.5" fill="#000"/>
  <circle cx="35.4" cy="16.6" r="11" fill="url(#mg)" stroke="#2a2a2a" stroke-width="1.2"/>
  <path d="M62.8,10.8 h3.3 v4.2 h4.2 v3.3 h-4.2 v4.2 h-3.3 v-4.2 h-4.2 v-3.3 h4.2 z" fill="url(#pm)" stroke="#6a6a6a" stroke-width="0.9"/>
</svg>
<div class="t" style="left:627.5px;top:97.5px;font-size:9px;letter-spacing:0.6px;color:#000">100</div>
<!-- spin arrows -->
<svg class="a" style="left:780px;top:96px" width="14" height="20" viewBox="0 0 14 20">
  <polygon points="6.5,2.5 10.5,7.5 2.5,7.5" fill="#000" stroke="#000" stroke-width="0.6"/>
  <polygon points="2.5,11 10.5,11 6.5,16" fill="#000" stroke="#000" stroke-width="0.6"/>
</svg>

<!-- handle dots -->
<svg class="a" style="left:5px;top:35px" width="8" height="50" shape-rendering="crispEdges">
<defs><pattern id="hd" width="8" height="3" patternUnits="userSpaceOnUse"><rect x="5" y="0" width="1" height="1" fill="#7a7a7a"/><rect x="1" y="1" width="1" height="1" fill="#fff"/><rect x="2" y="2" width="1" height="1" fill="#7a7a7a"/><rect x="4" y="2" width="1" height="1" fill="#fff"/></pattern></defs>
<rect x="0" y="1" width="8" height="48" fill="url(#hd)"/></svg>
<svg class="a" style="left:5px;top:87px" width="8" height="38" shape-rendering="crispEdges">
<rect x="0" y="1" width="8" height="36" fill="url(#hd)"/></svg>
<!-- sidebar folder -->
<svg class="a" style="left:40px;top:138px" width="80" height="72" viewBox="40 138 80 72">
  <defs>
    <linearGradient id="pap" gradientUnits="userSpaceOnUse" x1="80" y1="158" x2="74" y2="186"><stop offset="0" stop-color="#ffffff"/><stop offset="0.35" stop-color="#ececec"/><stop offset="0.7" stop-color="#7a7a7a"/><stop offset="1" stop-color="#2a2a2a"/></linearGradient>
    <linearGradient id="pap2" gradientUnits="userSpaceOnUse" x1="80" y1="176" x2="92" y2="184"><stop offset="0" stop-color="#404040"/><stop offset="1" stop-color="#f0f0f0"/></linearGradient>
    <linearGradient id="fld" x1="0" y1="0" x2="1" y2="1"><stop offset="0" stop-color="#a0ac9e"/><stop offset="1" stop-color="#7e8c7e"/></linearGradient>
    <filter id="shd" x="-30%" y="-30%" width="160%" height="160%"><feGaussianBlur stdDeviation="2.2"/></filter>
  </defs>
  <polygon points="59,180 90,199 100,196 106,172 98,186 90,195" fill="#000" opacity="0.75" filter="url(#shd)"/>
  <polygon points="72.4,145.4 82.4,149.5 83,153.8 102.9,167 90.5,195.5 70,165" fill="url(#fld)" stroke="#000" stroke-width="1.8" stroke-linejoin="round"/>
  <polygon points="64.3,150.2 93.2,168.3 88.8,195 64.3,165.7" fill="url(#pap)" stroke="#000" stroke-width="1.6" stroke-linejoin="round"/>
  <polygon points="84,172 92.8,169 90,184" fill="#ffffff" opacity="0.35" filter="url(#shd)"/>
  <polygon points="51.2,156.7 78.7,177.7 89.2,195.5 57.9,175.7" fill="url(#fld)" stroke="#000" stroke-width="1.8" stroke-linejoin="round"/>
  <path d="M54,160 L78,178.5" stroke="#e8ece6" stroke-width="0.8" opacity="0.8"/>
</svg>
<!-- computers -->
<svg class="a" style="left:192px;top:128px" width="50" height="50"><use href="#pc"/></svg>
<svg class="a" style="left:337px;top:128px" width="50" height="50"><use href="#pc"/></svg>
<svg class="a" style="left:483px;top:128px" width="50" height="50"><use href="#pc"/></svg>
<svg class="a" style="left:628px;top:128px" width="50" height="50"><use href="#pc"/></svg>
<svg class="a" style="left:192px;top:202px" width="50" height="50"><use href="#pc"/></svg>
<svg class="a" style="left:337px;top:202px" width="50" height="50"><use href="#pc"/></svg>
<svg class="a" style="left:483px;top:200px" width="50" height="50"><use href="#pc"/></svg>

<!-- sidebar tabs -->
<svg class="a" style="left:4px;top:490px" width="149" height="46" viewBox="4 490 149 46">
  <defs>
    <linearGradient id="tb" x1="0" y1="0" x2="0" y2="1"><stop offset="0" stop-color="#a4acc0"/><stop offset="0.15" stop-color="#939bb2"/><stop offset="0.6" stop-color="#8088a2"/><stop offset="1" stop-color="#6c7592"/></linearGradient>
    <linearGradient id="tbd" x1="0" y1="0" x2="1" y2="0"><stop offset="0" stop-color="#7a8098"/><stop offset="0.5" stop-color="#4e5262"/><stop offset="1" stop-color="#121318"/></linearGradient>
    <linearGradient id="sh" x1="0" y1="0" x2="1" y2="0"><stop offset="0" stop-color="#000" stop-opacity="0.85"/><stop offset="1" stop-color="#000" stop-opacity="0"/></linearGradient>
  </defs>
  <rect x="4" y="513" width="148" height="21" fill="#5a6078"/>
  <rect x="134" y="513" width="18" height="21" fill="url(#tbd)"/>
  <!-- row1 -->
  <path d="M44,492.5 L98,492.5 Q102,493 103,497.5 L108,512.5 L44,512.5 Z" fill="url(#tb)" stroke="#101010" stroke-width="1"/>
  <polygon points="49.5,496.5 55,512.5 59,512.5 52.5,496.5" fill="url(#sh)"/>
  <path d="M4,492.5 L46,492.5 Q48.5,493 49.5,496.5 L55,512.5 L4,512.5 Z" fill="url(#tb)" stroke="#101010" stroke-width="1"/>
  <rect x="4" y="512.5" width="148" height="1.2" fill="#15161a"/>
  <!-- row2 -->
  <path d="M40,514.5 L133,514.5 Q136.5,515 137.5,518.5 L142,533.5 L40,533.5 Z" fill="url(#tb)" stroke="#101010" stroke-width="1"/>
  <polygon points="137.5,518.5 142,533.5 146,533.5 140.5,518.5" fill="url(#sh)"/>
  <polygon points="44.5,518 49.5,533.5 53.5,533.5 47.5,518" fill="url(#sh)"/>
  <path d="M4,514.5 L41,514.5 Q43.5,515 44.5,518 L49.5,533.5 L4,533.5 Z" fill="url(#tb)" stroke="#101010" stroke-width="1"/>
  <rect x="4" y="534" width="148" height="1" fill="#9a9eac"/>
</svg>
<div class="t" style="left:11px;top:496px;font-weight:bold;color:#fff;text-shadow:1px 1px 0 #000">News</div>
<div class="t" style="left:58px;top:496px;font-weight:bold;color:#fff;text-shadow:1px 1px 0 #000">Notes</div>
<div class="t" style="left:11px;top:517px;font-weight:bold;color:#fff;text-shadow:1px 1px 0 #000">Help</div>
<div class="t" style="left:53px;top:517px;font-weight:bold;color:#fff;text-shadow:1px 1px 0 #000">History</div>

<!-- pane grip -->
<div class="a" style="left:154px;top:318px;width:4px;height:23px;background:repeating-linear-gradient(180deg,#707070 0,#707070 1px,transparent 1px,transparent 3px)"></div>
</div></body></html>
